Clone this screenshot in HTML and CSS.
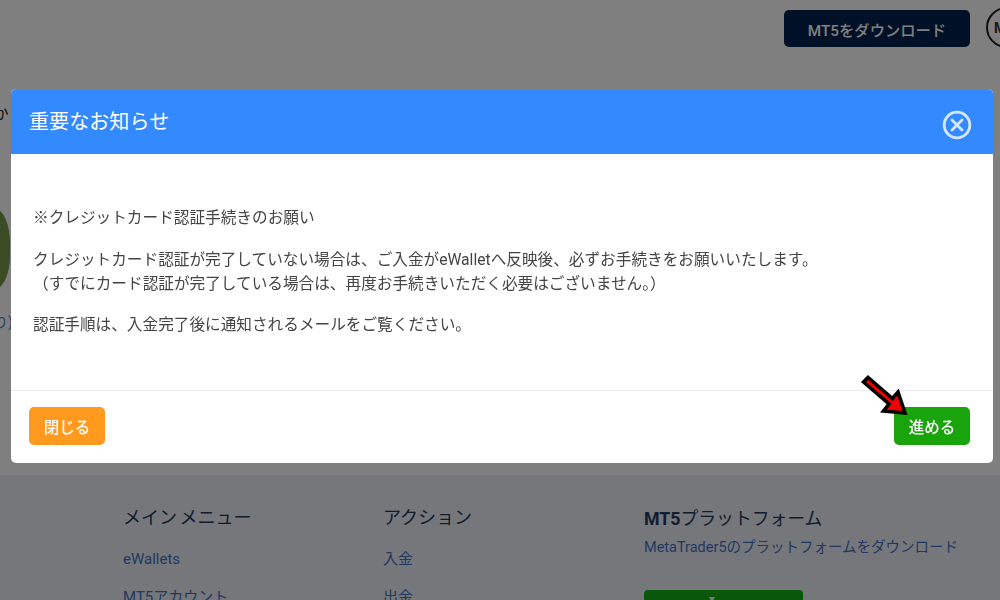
FILE: index.html
```html
<!DOCTYPE html>
<html lang="ja">
<head>
<meta charset="utf-8">
<title>重要なお知らせ</title>
<link rel="stylesheet" href="styles.css">
</head>
<body>
<div class="page">
  <header class="topbar">
    <a class="download">MT5をダウンロード</a>
    <span class="avatar">M</span>
  </header>
  <main class="content">
    <p class="clip-text">か</p>
    <div class="green-card"></div>
    <p class="clip-link">り)</p>
  </main>
  <footer class="footer">
    <nav class="col col-menu">
      <h3>メイン メニュー</h3>
      <a>eWallets</a>
      <a>MT5アカウント</a>
    </nav>
    <nav class="col col-action">
      <h3>アクション</h3>
      <a>入金</a>
      <a>出金</a>
    </nav>
    <section class="col col-platform">
      <h3><b>MT5</b>プラットフォーム</h3>
      <p>MetaTrader5のプラットフォームをダウンロード</p>
      <a class="store">
        <svg class="store-icon" viewBox="0 0 8 6" width="8" height="6"><path d="M1 0H7L5.5 3H5.5V6H2.500V3Z" fill="#e6efe6"/></svg>
      </a>
    </section>
  </footer>
</div>
<div class="backdrop"></div>
<div class="modal">
  <div class="modal-head">
    <h2>重要なお知らせ</h2>
    <svg class="close" viewBox="0 0 30 30" width="30" height="30" aria-label="閉じる">
      <circle cx="15" cy="15" r="12.8" fill="none" stroke="#d6e7ff" stroke-width="2.8"/>
      <path d="M10 10L20 20M20 10L10 20" fill="none" stroke="#d6e7ff" stroke-width="2.8" stroke-linecap="round"/>
    </svg>
  </div>
  <div class="modal-body">
    <p class="lead"><span class="mark">※</span>クレジットカード認証手続きのお願い</p>
    <p class="detail">クレジットカード認証が完了していない場合は、ご入金がeWalletへ反映後、必ずお手続きをお願いいたします。<br>（すでにカード認証が完了している場合は、再度お手続きいただく必要はございません。）</p>
    <p>認証手順は、入金完了後に通知されるメールをご覧ください。</p>
  </div>
  <div class="modal-foot">
    <button class="btn btn-close">閉じる</button>
    <button class="btn btn-next">進める</button>
  </div>
</div>
<svg class="arrow" viewBox="0 0 60 50" width="60" height="50">
  <path d="M8.500 12L13 7.500L37.500 28.500L43 22L50 43L28.500 41L34 34Z" fill="#f00000" stroke="#000" stroke-width="3.600" stroke-linejoin="miter"/>
</svg>
</body>
</html>
```
FILE: styles.css
```css
* { box-sizing: border-box; }
html, body { margin: 0; height: 100%; overflow: hidden; }
body {
  font-family: "Roboto", "Noto Sans CJK JP", "Noto Sans", sans-serif;
  color: #333;
  background: #fff;
}
.page { height: 600px; display: flex; flex-direction: column; overflow: hidden; }
.topbar {
  height: 89px;
  padding: 10px 0 0;
  display: flex;
  justify-content: flex-end;
  align-items: flex-start;
  gap: 16px;
  margin-right: -27px;
}
.download {
  width: 186px;
  height: 37px;
  border-radius: 5px;
  background: #00234f;
  color: #fff;
  font-size: 15.3px;
  font-weight: 500;
  display: flex;
  align-items: center;
  justify-content: center;
}
.avatar {
  width: 41px;
  height: 41px;
  margin-top: -3px;
  border-radius: 50%;
  border: 2px solid #222;
  display: flex;
  align-items: center;
  padding-left: 6px;
  font-size: 14px;
  font-weight: 700;
}
.content { flex: 1; }
.clip-text { margin: 14px 0 0 -7px; font-size: 15.6px; line-height: 22px; color: #222; }
.green-card {
  width: 30px;
  height: 80px;
  margin: 84px 0 0 -20px;
  border-radius: 15px / 34px;
  background: #769848;
}
.clip-link { margin: 23px 0 0 -6px; font-size: 14px; line-height: 20px; color: #3f7cc9; }
.footer {
  height: 125px;
  background: #ebeff4;
  padding: 30px 0 0 123px;
  display: grid;
  grid-template-columns: 260px 261px 1fr;
}
.col h3 { margin: 0; font-size: 18px; line-height: 26px; font-weight: 400; color: #223a5e; word-spacing: -2px; }
.col h3 b { font-weight: 700; }
.col a { display: block; color: #4471c4; font-size: 15px; line-height: 20px; margin-top: 18px; }
.col-platform h3 { padding-top: 1px; font-size: 17.8px; }
.col-platform p { margin: 6px 0 0; font-size: 14.5px; line-height: 20px; color: #4471c4; }
.col .store {
  width: 159px;
  height: 40px;
  margin-top: 32px;
  padding-top: 7px;
  display: flex;
  justify-content: center;
  border-radius: 4px;
  background: #12ae12;
}
.store-icon { margin-left: -24px; }
.backdrop { position: fixed; inset: 0; background: rgba(0, 0, 0, .5); }
.modal {
  position: fixed;
  left: 11px;
  top: 89px;
  width: 982px;
  height: 374px;
  background: #fff;
  border-radius: 5px;
  display: flex;
  flex-direction: column;
  overflow: hidden;
}
.modal-head {
  height: 65px;
  flex: none;
  background: #338aff;
  padding: 0 21px 0 18px;
  display: flex;
  align-items: center;
  justify-content: space-between;
}
.modal-head h2 { margin: 0 0 2px; font-size: 20.100px; font-weight: 400; color: #fff; }
.close { margin-top: 7px; }
.modal-body {
  flex: 1;
  padding: 51px 22px 0;
  font-size: 15.65px;
  line-height: 24px;
  color: #444;
}
.mark { font-family: "Noto Sans CJK JP", sans-serif; }
.modal-body p { margin: 0; }
.modal-body .lead { margin-bottom: 18px; }
.modal-body .detail { margin-bottom: 17px; }
.modal-foot {
  height: 73px;
  flex: none;
  border-top: 1px solid #e9ecef;
  padding: 16px 23px 0 18px;
  display: flex;
  justify-content: space-between;
  align-items: flex-start;
}
.btn {
  width: 76px;
  height: 38px;
  border: 0;
  border-radius: 5px;
  padding: 0;
  color: #fff;
  font: 500 15.5px "Roboto", "Noto Sans CJK JP", sans-serif;
}
.btn-close { background: #ff9a1f; }
.btn-next { background: #18a40a; }
.arrow { position: fixed; left: 855px; top: 370px; }
```
